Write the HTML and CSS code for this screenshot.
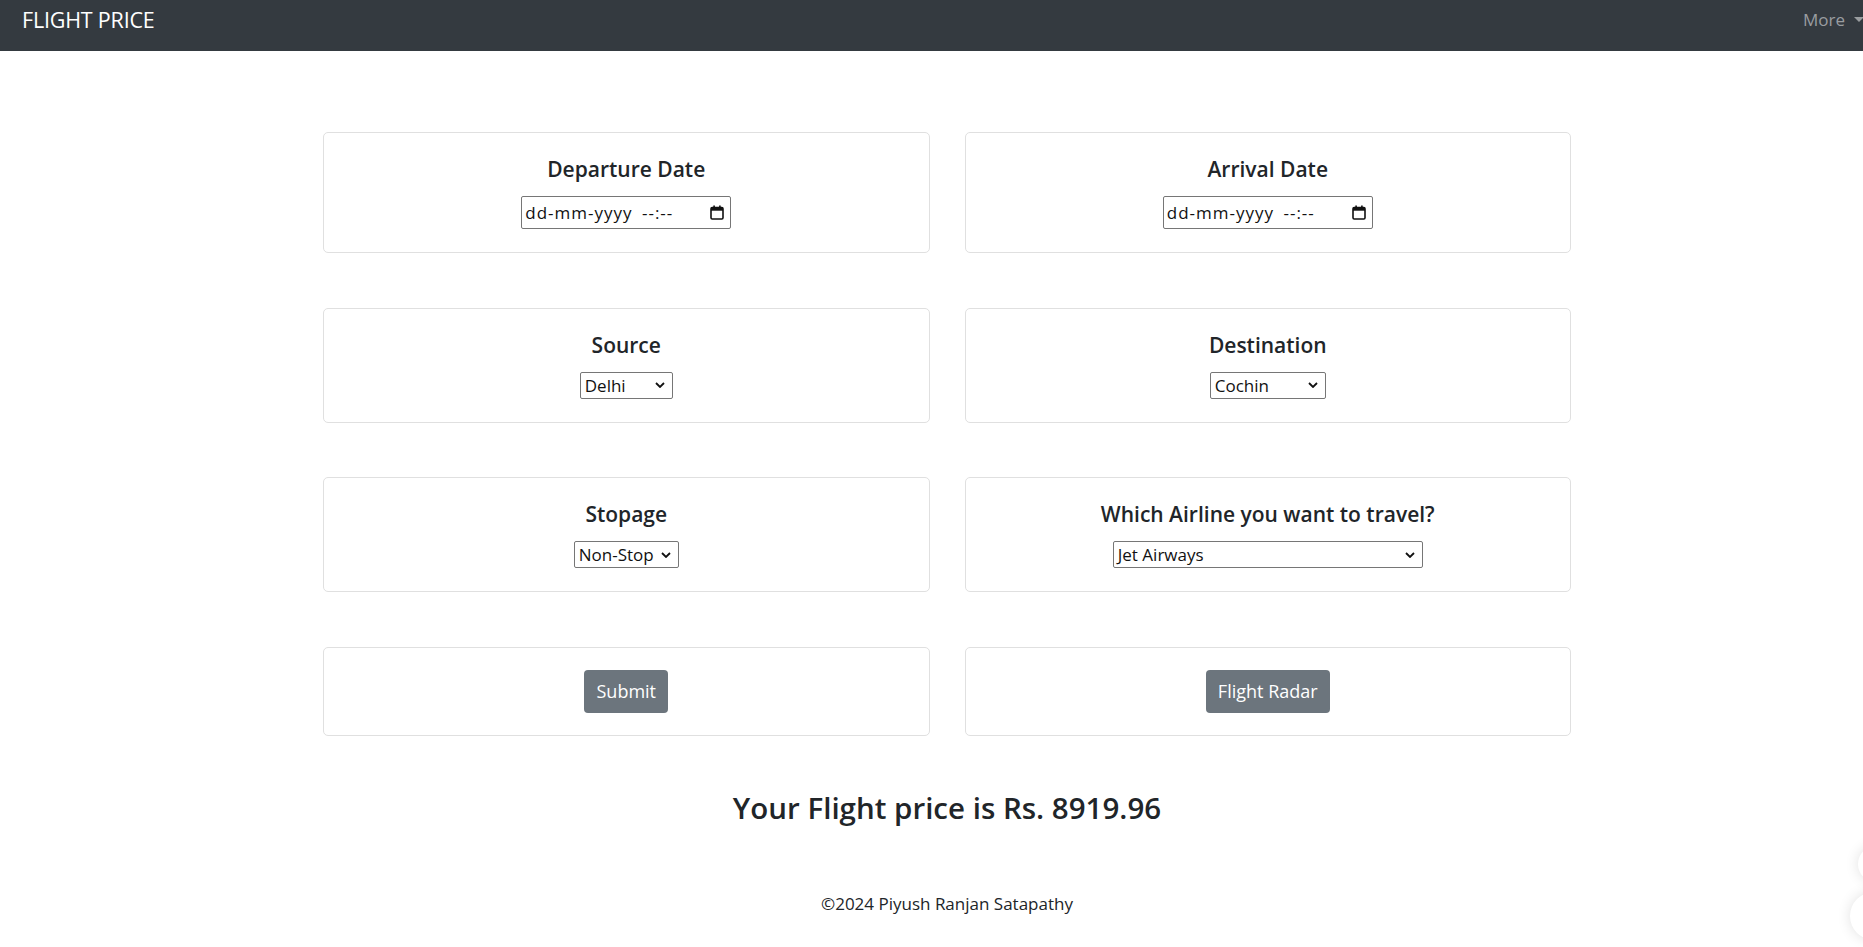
FILE: index.html
```html
<!DOCTYPE html>
<html lang="en">
<head>
<meta charset="utf-8">
<title>Flight Price</title>
<link rel="stylesheet" href="styles.css">
</head>
<body>
<div class="page">
  <nav class="navbar">
    <a class="brand" href="#">FLIGHT PRICE</a>
    <a class="more" href="#">More<span class="caret"></span></a>
  </nav>

  <main class="container">
    <form class="grid">
      <div class="card">
        <h5 class="card-title">Departure Date</h5>
        <div class="date-field"><span class="date-text">dd-mm-yyyy --:--</span>
          <svg class="cal" viewBox="0 0 14 15" width="14" height="15"><rect x="1" y="2.5" width="12" height="11.5" rx="1.2" fill="none" stroke="#111" stroke-width="1.6"/><rect x="1" y="2.5" width="12" height="3.2" fill="#111"/><rect x="3.3" y="0.5" width="1.6" height="3" fill="#111"/><rect x="9.1" y="0.5" width="1.6" height="3" fill="#111"/></svg>
        </div>
      </div>
      <div class="card">
        <h5 class="card-title">Arrival Date</h5>
        <div class="date-field"><span class="date-text">dd-mm-yyyy --:--</span>
          <svg class="cal" viewBox="0 0 14 15" width="14" height="15"><rect x="1" y="2.5" width="12" height="11.5" rx="1.2" fill="none" stroke="#111" stroke-width="1.6"/><rect x="1" y="2.5" width="12" height="3.2" fill="#111"/><rect x="3.3" y="0.5" width="1.6" height="3" fill="#111"/><rect x="9.1" y="0.5" width="1.6" height="3" fill="#111"/></svg>
        </div>
      </div>

      <div class="card">
        <h5 class="card-title">Source</h5>
        <div class="select-field w-delhi"><span>Delhi</span><svg class="chev" viewBox="0 0 10 6" width="10" height="6"><path d="M1 1l4 4 4-4" fill="none" stroke="#111" stroke-width="1.8"/></svg></div>
      </div>
      <div class="card">
        <h5 class="card-title">Destination</h5>
        <div class="select-field w-cochin"><span>Cochin</span><svg class="chev" viewBox="0 0 10 6" width="10" height="6"><path d="M1 1l4 4 4-4" fill="none" stroke="#111" stroke-width="1.8"/></svg></div>
      </div>

      <div class="card">
        <h5 class="card-title">Stopage</h5>
        <div class="select-field w-stop"><span>Non-Stop</span><svg class="chev" viewBox="0 0 10 6" width="10" height="6"><path d="M1 1l4 4 4-4" fill="none" stroke="#111" stroke-width="1.8"/></svg></div>
      </div>
      <div class="card">
        <h5 class="card-title">Which Airline you want to travel?</h5>
        <div class="select-field w-air"><span>Jet Airways</span><svg class="chev" viewBox="0 0 10 6" width="10" height="6"><path d="M1 1l4 4 4-4" fill="none" stroke="#111" stroke-width="1.8"/></svg></div>
      </div>

      <div class="card card-btn">
        <button type="button" class="btn">Submit</button>
      </div>
      <div class="card card-btn">
        <button type="button" class="btn">Flight Radar</button>
      </div>
    </form>

    <h3 class="price">Your Flight price is Rs. 8919.96</h3>

    <footer class="footer">©2024 Piyush Ranjan Satapathy</footer>
  </main>

  <div class="bubble bubble-a"></div>
  <div class="bubble bubble-b"></div>
</div>
</body>
</html>
```

FILE: styles.css
```css
html, body {
  margin: 0;
  padding: 0;
  background: #fff;
  overflow: hidden;
}

body {
  font-family: "Open Sans", "Noto Sans", "Liberation Sans", sans-serif;
  color: #212529;
}

.page {
  width: 1894px;
  height: 947px;
  position: relative;
}

.navbar {
  height: 51px;
  background: #343a40;
  display: flex;
  justify-content: space-between;
  align-items: flex-start;
  padding: 0 30px 0 22px;
  box-sizing: border-box;
}

.brand {
  color: #fff;
  text-decoration: none;
  font-size: 21.5px;
  line-height: 40px;
  letter-spacing: -0.2px;
}

.more {
  color: #9a9da0;
  text-decoration: none;
  font-size: 17px;
  line-height: 39px;
  display: flex;
  align-items: center;
}

.caret {
  display: inline-block;
  margin-left: 9px;
  width: 0;
  height: 0;
  border-top: 5px solid #9a9da0;
  border-left: 5px solid transparent;
  border-right: 5px solid transparent;
}

.container {
  width: 1248px;
  margin: 0 auto;
  padding-top: 81px;
}

.grid {
  display: grid;
  grid-template-columns: 1fr 1fr;
  column-gap: 35px;
  row-gap: 54.5px;
  margin: 0;
}

.card {
  border: 1px solid #e0e0e0;
  border-radius: 5px;
  padding: 21px 20px 23px;
  display: flex;
  flex-direction: column;
  align-items: center;
}

.card-title {
  margin: 0 0 11px;
  font-size: 21px;
  font-weight: 600;
  line-height: 31px;
  color: #212529;
}

.date-field {
  width: 210px;
  height: 33px;
  box-sizing: border-box;
  border: 1px solid #767676;
  border-radius: 2px;
  display: flex;
  align-items: center;
  justify-content: space-between;
  padding: 0 6px 0 3px;
  font-size: 17px;
  color: #111;
}

.date-text {
  letter-spacing: 1px;
  word-spacing: 4px;
}

.cal {
  display: block;
}

.select-field {
  height: 27px;
  box-sizing: border-box;
  border: 1px solid #767676;
  border-radius: 2px;
  display: flex;
  align-items: center;
  justify-content: space-between;
  padding: 0 7px 0 4px;
  font-size: 17px;
  color: #111;
}

.chev {
  display: block;
}

.w-delhi { width: 93px; }
.w-cochin { width: 116px; }
.w-stop { width: 105px; }
.w-air { width: 310px; }

.card-btn {
  padding: 22px 20px 22px;
}

.btn {
  height: 43px;
  border: 0;
  border-radius: 4px;
  background: #6c757d;
  color: #fff;
  font-family: inherit;
  font-size: 18px;
  padding: 0 12px;
  line-height: 43px;
}

.price {
  margin: 52px 0 0;
  text-align: center;
  font-size: 29.5px;
  font-weight: 600;
  line-height: 40px;
  color: #212529;
}

.footer {
  margin-top: 64px;
  text-align: center;
  font-size: 17px;
  line-height: 24px;
  color: #212529;
}

.bubble {
  position: absolute;
  border-radius: 50%;
  background: #fff;
  box-shadow: 0 0 14px rgba(0, 0, 0, 0.12);
}

.bubble-a {
  left: 1858px;
  top: 846px;
  width: 36px;
  height: 36px;
}

.bubble-b {
  left: 1850px;
  top: 892px;
  width: 48px;
  height: 48px;
}
```
